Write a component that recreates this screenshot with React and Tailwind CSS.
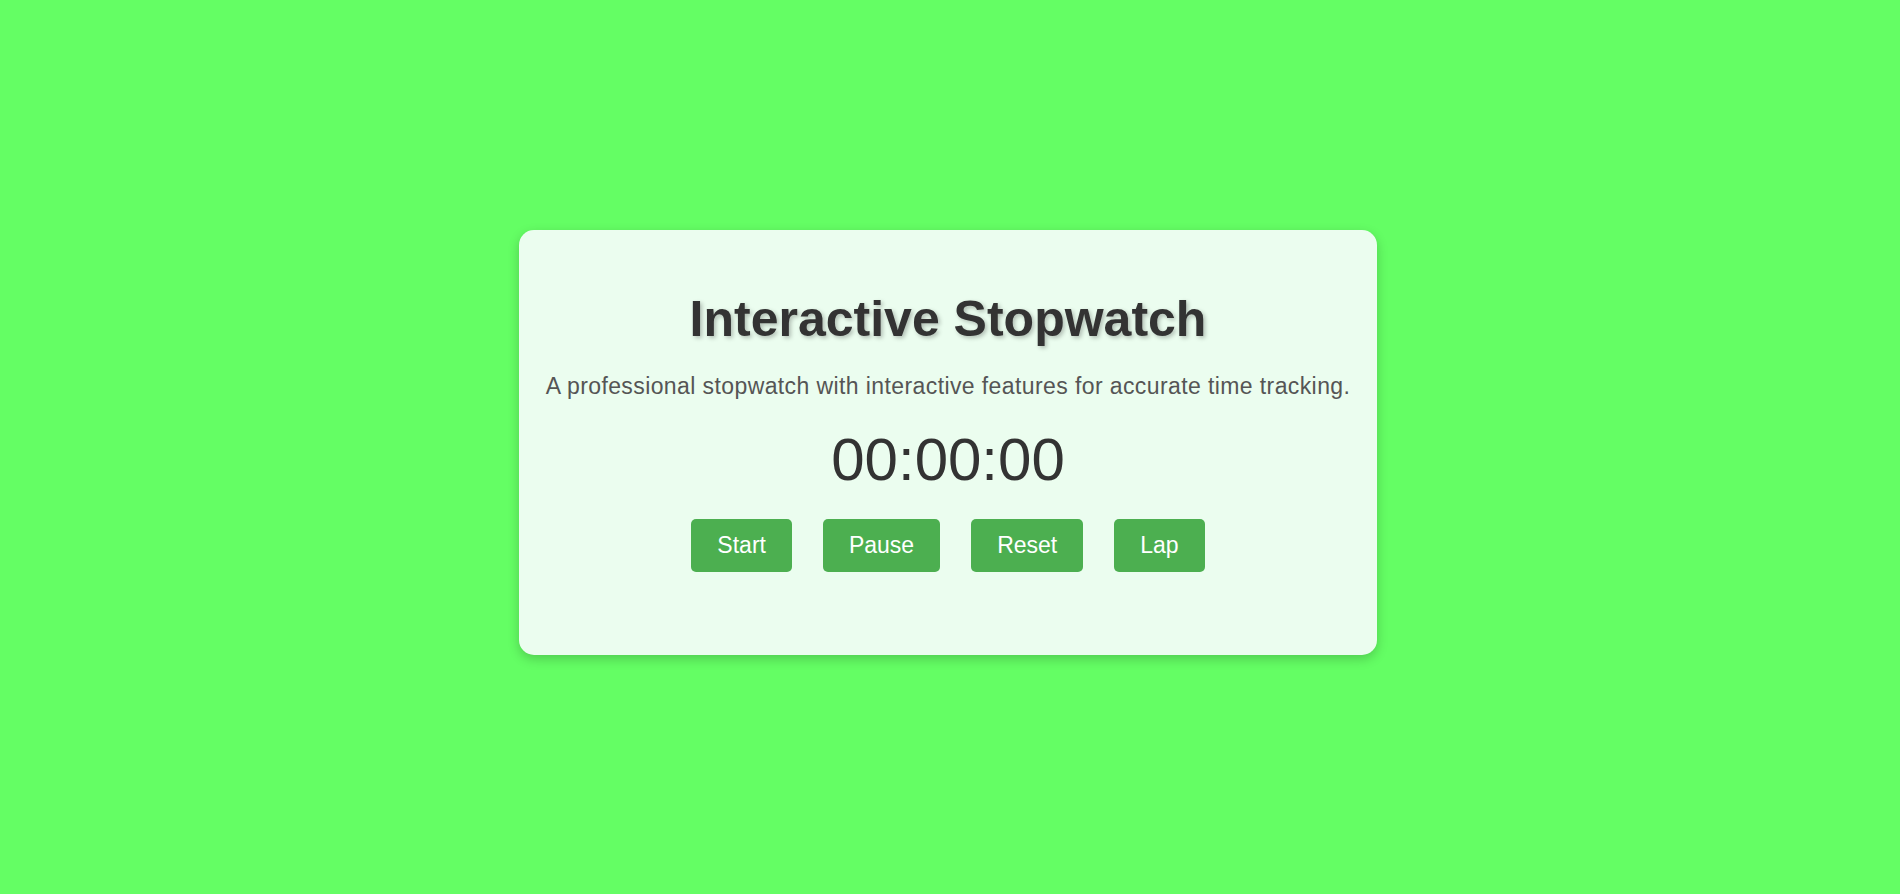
import { useState, useEffect, useRef } from "react";

function formatTime(ms) {
  const totalSec = Math.floor(ms / 1000);
  const h = String(Math.floor(totalSec / 3600)).padStart(2, "0");
  const m = String(Math.floor((totalSec % 3600) / 60)).padStart(2, "0");
  const s = String(totalSec % 60).padStart(2, "0");
  return `${h}:${m}:${s}`;
}

function App() {
  const [elapsed, setElapsed] = useState(0);
  const [running, setRunning] = useState(false);
  const [laps, setLaps] = useState([]);
  const startRef = useRef(0);

  useEffect(() => {
    if (!running) return;
    startRef.current = Date.now() - elapsed;
    const id = setInterval(() => setElapsed(Date.now() - startRef.current), 200);
    return () => clearInterval(id);
  }, [running]);

  const handleReset = () => {
    setRunning(false);
    setElapsed(0);
    setLaps([]);
  };

  const buttons = [
    { label: "Start", onClick: () => setRunning(true) },
    { label: "Pause", onClick: () => setRunning(false) },
    { label: "Reset", onClick: handleReset },
    { label: "Lap", onClick: () => setLaps((l) => [...l, elapsed]) },
  ];

  return (
    <div
      className="min-h-screen flex items-center justify-center bg-[#64fe64] pb-[9px] pr-[4px]"
      style={{ fontFamily: '"Liberation Sans", Arial, sans-serif' }}
    >
      <div className="w-[858px] bg-[#ebfdef] rounded-[15px] shadow-[0_4px_12px_rgba(0,0,0,0.2)] pt-[60px] pb-[83px] flex flex-col items-center">
        <h1 className="text-[50px] leading-[58px] font-bold text-[#333333] [text-shadow:2px_2px_4px_rgba(0,0,0,0.25)]">
          Interactive Stopwatch
        </h1>

        <p className="mt-[25px] text-[23px] leading-[26px] text-[#555555] tracking-[0.4px]">
          A professional stopwatch with interactive features for accurate time tracking.
        </p>

        <div className="mt-[26px] text-[60px] leading-[70px] text-[#333333]">
          {formatTime(elapsed)}
        </div>

        <div className="mt-[24px] flex gap-[31px]">
          {buttons.map((b) => (
            <button
              key={b.label}
              onClick={b.onClick}
              className="h-[53px] px-[26px] bg-[#4caf50] text-white text-[23px] rounded-[5px] flex items-center justify-center hover:bg-[#45a049] transition"
            >
              {b.label}
            </button>
          ))}
        </div>

        {laps.length > 0 && (
          <ul className="mt-[20px] text-[18px] text-[#333333]">
            {laps.map((lap, i) => (
              <li key={i}>
                Lap {i + 1}: {formatTime(lap)}
              </li>
            ))}
          </ul>
        )}
      </div>
    </div>
  );
}

export default App;
